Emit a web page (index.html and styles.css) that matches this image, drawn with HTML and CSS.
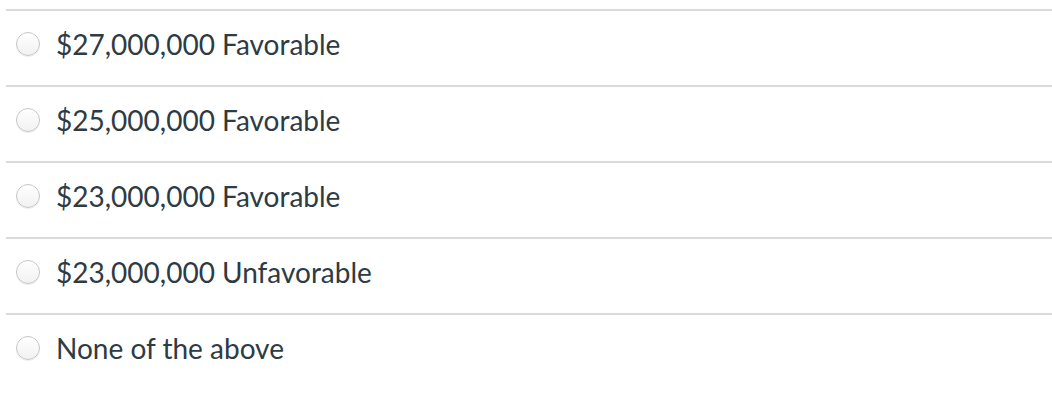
FILE: index.html
```html
<!DOCTYPE html>
<html>
<head>
<meta charset="utf-8">
<link rel="stylesheet" href="styles.css">
</head>
<body>
<div class="answers">
  <div class="answer"><span class="radio"></span><span class="label">$27,000,000 Favorable</span></div>
  <div class="answer"><span class="radio"></span><span class="label">$25,000,000 Favorable</span></div>
  <div class="answer"><span class="radio"></span><span class="label">$23,000,000 Favorable</span></div>
  <div class="answer"><span class="radio"></span><span class="label">$23,000,000 Unfavorable</span></div>
  <div class="answer"><span class="radio"></span><span class="label">None of the above</span></div>
</div>
</body>
</html>
```
FILE: styles.css
```css
html, body {
  margin: 0;
  background: #fff;
}
body {
  font-family: Lato, "Liberation Sans", sans-serif;
  color: #2d3b45;
}
.answers {
  padding-top: 9px;
  margin-left: 6px;
}
.answer {
  display: flex;
  align-items: center;
  height: 66px;
  padding-bottom: 8px;
  border-top: 2px solid #dadada;
}
.radio {
  box-sizing: border-box;
  width: 24px;
  height: 24px;
  margin-left: 10px;
  margin-right: 16px;
  border-radius: 50%;
  border: 1px solid #c6c6c6;
  background: linear-gradient(#ffffff, #f1f1f1);
  box-shadow: 0 1px 1px rgba(0,0,0,0.07);
  flex: none;
}
.label {
  font-size: 28px;
  line-height: 1;
}
```
